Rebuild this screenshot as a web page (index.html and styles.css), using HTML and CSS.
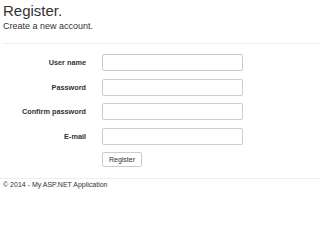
FILE: index.html
```html
<!DOCTYPE html>
<html>
<head>
<meta charset="utf-8">
<link rel="stylesheet" href="styles.css">
</head>
<body>
<div class="container">
  <h2 class="title">Register.</h2>
  <h4 class="subtitle">Create a new account.</h4>
  <hr class="rule">
  <form class="form">
    <label class="label">User name</label>
    <input class="input" type="text">
    <label class="label">Password</label>
    <input class="input" type="password">
    <label class="label">Confirm password</label>
    <input class="input" type="password">
    <label class="label">E-mail</label>
    <input class="input" type="text">
    <div class="btn-cell"><button class="btn" type="button">Register</button></div>
  </form>
  <hr class="rule footer-rule">
  <footer class="footer">© 2014 - My ASP.NET Application</footer>
</div>
</body>
</html>
```
FILE: styles.css
```css
html, body {
  margin: 0;
  padding: 0;
  background: #fff;
}
body {
  font-family: "Liberation Sans", Arial, sans-serif;
  font-size: 7px;
  line-height: 10px;
  color: #333;
}
.container {
  padding-left: 3px;
}
.title {
  font-size: 15px;
  line-height: 16.5px;
  font-weight: normal;
  margin: 3.3px 0 0;
}
.subtitle {
  font-size: 9px;
  line-height: 9.9px;
  font-weight: normal;
  margin: 2.6px 0 0;
}
.rule {
  margin: 10.5px 0 0;
  border: 0;
  border-top: 1px solid #eee;
  height: 0;
}
.form {
  margin-top: 10.3px;
  display: grid;
  grid-template-columns: 83px 141.5px;
  column-gap: 15.7px;
  row-gap: 7.6px;
  align-items: center;
}
.label {
  text-align: right;
  font-weight: bold;
  font-size: 7.3px;
  line-height: 10px;
  padding-top: 1px;
}
.input {
  box-sizing: border-box;
  height: 17px;
  width: 141.5px;
  margin: 0;
  border: 1px solid #ccc;
  border-radius: 2px;
  background: #fff;
  padding: 0 4px;
}
.btn-cell {
  grid-column: 2;
}
.btn {
  box-sizing: border-box;
  width: 40px;
  height: 15px;
  margin: 0 0 0 0.3px;
  padding: 0;
  border: 1px solid #ccc;
  border-radius: 2px;
  background: #fff;
  color: #333;
  font-family: "Liberation Sans", Arial, sans-serif;
  font-size: 7px;
  line-height: 13px;
  display: block;
}
.footer-rule {
  margin-top: 10.7px;
  margin-left: -3px;
}
.footer {
  margin-top: 1.2px;
  font-size: 7px;
  line-height: 10px;
}
```
